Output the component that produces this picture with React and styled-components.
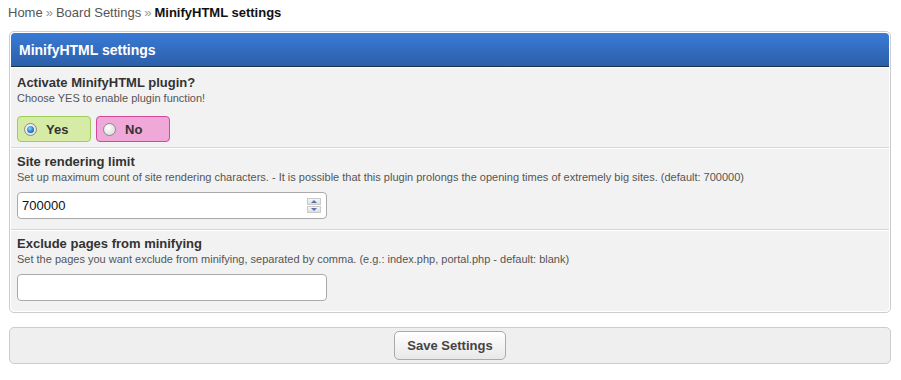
import React from "react";
import styled, { createGlobalStyle } from "styled-components";

const Global = createGlobalStyle`
  html, body { margin: 0; padding: 0; background: #fff; }
  body { font-family: "Liberation Sans", Arial, sans-serif; color: #333; }
  * { box-sizing: border-box; }
`;

const Page = styled.div`
  padding: 5px 10px 0 9px;
`;

const Crumbs = styled.div`
  font-size: 13px;
  line-height: 16px;
  color: #555;
  margin-left: -1px;
  margin-bottom: 10px;
  b { color: #111; }
`;

const Sep = styled.span`
  color: #999;
  margin: 0 3px;
`;

const Panel = styled.div`
  border: 1px solid #ccc;
  border-radius: 5px;
  padding: 1px;
  background: #fff;
`;

const Header = styled.div`
  height: 34px;
  background: linear-gradient(#3a7bd6, #2b5fa9);
  border-bottom: 1px solid #17344a;
  border-radius: 4px 4px 0 0;
  color: #fff;
  font-weight: bold;
  font-size: 14px;
  display: flex;
  align-items: center;
  padding-left: 8px;
`;

const Row = styled.div`
  background: #f2f2f2;
  border-top: 1px solid #fff;
  border-bottom: ${(p) => (p.$last ? "none" : "1px solid #d6d6d6")};
  padding: ${(p) => p.$pad};
  border-radius: ${(p) => (p.$last ? "0 0 4px 4px" : "0")};
`;

const Title = styled.div`
  font-size: 13px;
  font-weight: bold;
  line-height: 16px;
  color: #333;
`;

const Desc = styled.div`
  font-size: 11px;
  line-height: 14px;
  color: #555;
`;

const Choices = styled.div`
  display: flex;
  gap: 5px;
  margin-top: 11px;
`;

const Choice = styled.label`
  width: 74px;
  height: 26px;
  border-radius: 4px;
  border: 1px solid ${(p) => p.$border};
  background: ${(p) => p.$bg};
  display: flex;
  align-items: center;
  padding-left: 6px;
  gap: 9px;
  font-size: 13px;
  font-weight: bold;
  color: #333;
`;

const Radio = styled.span`
  width: 13px;
  height: 13px;
  border-radius: 50%;
  border: 1px solid #8a8a8a;
  background: radial-gradient(circle at 40% 35%, #ffffff, #d4d4d4);
  display: flex;
  align-items: center;
  justify-content: center;
  &::after {
    content: "";
    width: 7px;
    height: 7px;
    border-radius: 50%;
    display: ${(p) => (p.$checked ? "block" : "none")};
    background: radial-gradient(circle at 40% 35%, #7fd8ff, #1f72bb 65%, #0c3f80);
  }
`;

const Field = styled.div`
  margin-top: 8px;
  width: 310px;
  height: 27px;
  border: 1px solid #aaa;
  border-radius: 4px;
  background: #fff;
  display: flex;
  align-items: center;
  padding: 0 5px 0 4px;
  font-size: 13px;
  color: #111;
`;

const Value = styled.span`
  flex: 1;
`;

const Spinner = styled.span`
  display: flex;
  flex-direction: column;
  gap: 1px;
`;

const SpinBtn = styled.span`
  width: 14px;
  height: 7px;
  background: linear-gradient(#f6f6f6, #dedede);
  border: 1px solid #cacaca;
  display: flex;
  align-items: center;
  justify-content: center;
  &::after {
    content: "";
    border-left: 3px solid transparent;
    border-right: 3px solid transparent;
    ${(p) => (p.$up ? "border-bottom: 3px solid #5572b6;" : "border-top: 3px solid #5572b6;")}
  }
`;

const Actions = styled.div`
  margin-top: 14px;
  height: 37px;
  border: 1px solid #ccc;
  border-radius: 5px;
  background: #efefef;
  display: flex;
  align-items: center;
  justify-content: center;
`;

const Button = styled.button`
  height: 29px;
  width: 112px;
  border: 1px solid #aaa;
  border-radius: 5px;
  background: linear-gradient(#ffffff, #e8e8e8);
  font-family: inherit;
  font-size: 13px;
  font-weight: bold;
  color: #444;
  padding: 0;
`;

export default function App() {
  return (
    <>
      <Global />
      <Page>
        <Crumbs>
          Home<Sep>»</Sep>Board Settings<Sep>»</Sep><b>MinifyHTML settings</b>
        </Crumbs>
        <Panel>
          <Header>MinifyHTML settings</Header>
          <Row $pad="7px 6px 5px">
            <Title>Activate MinifyHTML plugin?</Title>
            <Desc>Choose YES to enable plugin function!</Desc>
            <Choices>
              <Choice $bg="#d6eba6" $border="#9dcd5c">
                <Radio $checked />
                Yes
              </Choice>
              <Choice $bg="#f0a8d8" $border="#d2489c">
                <Radio />
                No
              </Choice>
            </Choices>
          </Row>
          <Row $pad="5px 6px 10px">
            <Title>Site rendering limit</Title>
            <Desc>
              Set up maximum count of site rendering characters. - It is possible that this plugin prolongs the opening times of extremely big sites. (default: 700000)
            </Desc>
            <Field>
              <Value>700000</Value>
              <Spinner>
                <SpinBtn $up />
                <SpinBtn />
              </Spinner>
            </Field>
          </Row>
          <Row $pad="5px 6px 10px" $last>
            <Title>Exclude pages from minifying</Title>
            <Desc>
              Set the pages you want exclude from minifying, separated by comma. (e.g.: index.php, portal.php - default: blank)
            </Desc>
            <Field />
          </Row>
        </Panel>
        <Actions>
          <Button>Save Settings</Button>
        </Actions>
      </Page>
    </>
  );
}
